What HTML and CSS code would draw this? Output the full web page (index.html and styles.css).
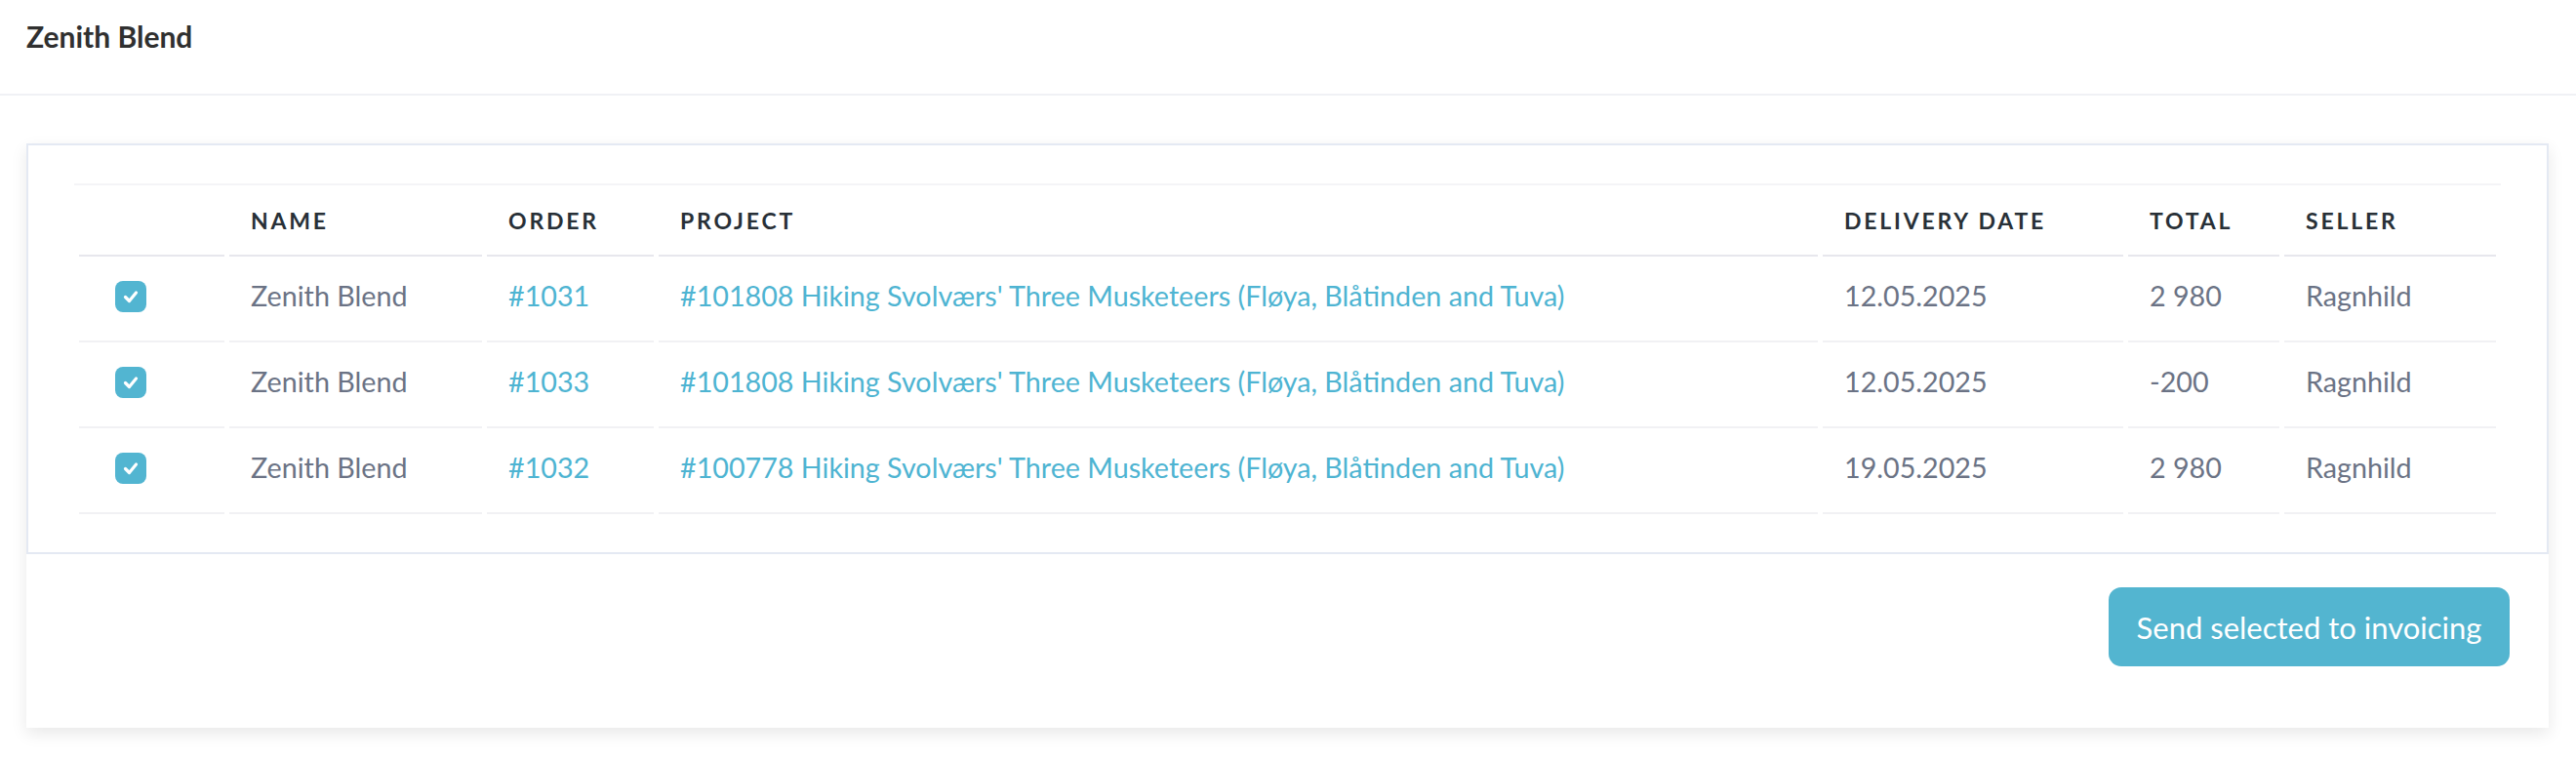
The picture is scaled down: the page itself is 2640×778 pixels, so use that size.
FILE: index.html
```html
<!DOCTYPE html>
<html lang="en">
<head>
    <meta charset="UTF-8">
    <meta name="viewport" content="width=device-width, initial-scale=1.0">
    <title>Zenith Blend</title>
    <link rel="stylesheet" href="styles.css">
</head>
<body>
    <div id="top-bar">
        <h1 id="title">Zenith Blend</h1>
    </div>
    <div id="main">
        <div class="card">
            <div class="card-body">
                <table class="orders">
                    <colgroup>
                        <col class="col-check">
                        <col class="col-name">
                        <col class="col-order">
                        <col class="col-project">
                        <col class="col-date">
                        <col class="col-total">
                        <col class="col-seller">
                    </colgroup>
                    <thead>
                        <tr>
                            <th></th>
                            <th>Name</th>
                            <th>Order</th>
                            <th>Project</th>
                            <th>Delivery date</th>
                            <th>Total</th>
                            <th>Seller</th>
                        </tr>
                    </thead>
                    <tbody>
                        <tr>
                            <td class="check-cell"><span class="checkbox"><svg viewBox="0 0 32 32" width="32" height="32"><path d="M10.5 16.5l4 4 7-8.5" fill="none" stroke="#fff" stroke-width="3.2" stroke-linecap="round" stroke-linejoin="round"/></svg></span></td>
                            <td>Zenith Blend</td>
                            <td><a href="#" class="link">#1031</a></td>
                            <td><a href="#" class="link">#101808 Hiking Svolværs' Three Musketeers (Fløya, Blåtinden and Tuva)</a></td>
                            <td>12.05.2025</td>
                            <td>2 980</td>
                            <td>Ragnhild</td>
                        </tr>
                        <tr>
                            <td class="check-cell"><span class="checkbox"><svg viewBox="0 0 32 32" width="32" height="32"><path d="M10.5 16.5l4 4 7-8.5" fill="none" stroke="#fff" stroke-width="3.2" stroke-linecap="round" stroke-linejoin="round"/></svg></span></td>
                            <td>Zenith Blend</td>
                            <td><a href="#" class="link">#1033</a></td>
                            <td><a href="#" class="link">#101808 Hiking Svolværs' Three Musketeers (Fløya, Blåtinden and Tuva)</a></td>
                            <td>12.05.2025</td>
                            <td>-200</td>
                            <td>Ragnhild</td>
                        </tr>
                        <tr>
                            <td class="check-cell"><span class="checkbox"><svg viewBox="0 0 32 32" width="32" height="32"><path d="M10.5 16.5l4 4 7-8.5" fill="none" stroke="#fff" stroke-width="3.2" stroke-linecap="round" stroke-linejoin="round"/></svg></span></td>
                            <td>Zenith Blend</td>
                            <td><a href="#" class="link">#1032</a></td>
                            <td><a href="#" class="link">#100778 Hiking Svolværs' Three Musketeers (Fløya, Blåtinden and Tuva)</a></td>
                            <td>19.05.2025</td>
                            <td>2 980</td>
                            <td>Ragnhild</td>
                        </tr>
                    </tbody>
                </table>
            </div>
            <div class="card-footer">
                <button class="send-button">Send selected to invoicing</button>
            </div>
        </div>
    </div>
</body>
</html>
```

FILE: styles.css
```css
body{
    margin: 0;
    padding: 0;
    background-color: #ffffff;
    font-family: Lato, "Open Sans", sans-serif;
}

#top-bar{
    box-sizing: border-box;
    height: 98px;
    padding: 19px 27px 0 27px;
    border-bottom: 2px solid #f0f1f5;
}

#title{
    margin: 0;
    font-size: 30px;
    font-weight: 700;
    line-height: 36px;
    color: #303030;
}

#main{
    padding: 49px 28px 30px 27px;
}

.card{
    background-color: #ffffff;
    box-shadow: 0 6px 16px rgba(0, 0, 0, 0.09);
}

.card-body{
    border: 2px solid #e4e9f3;
    padding: 39px 47px 39px 47px;
}

.orders{
    width: 100%;
    table-layout: fixed;
    border-collapse: separate;
    border-spacing: 5px 0;
    border-top: 2px solid #f4f4f7;
}

.col-check{ width: 149px; }
.col-name{ width: 259px; }
.col-order{ width: 171px; }
.col-project{ width: 1188px; }
.col-date{ width: 308px; }
.col-total{ width: 155px; }

.orders th{
    height: 71px;
    padding: 0 0 0 22px;
    text-align: left;
    font-size: 23px;
    font-weight: 700;
    letter-spacing: 2.8px;
    text-transform: uppercase;
    color: #283037;
    border-bottom: 2px solid #e7e7ed;
}

.orders td{
    height: 88px;
    padding: 0 0 6px 22px;
    box-sizing: border-box;
    font-size: 28.7px;
    color: #6b7385;
    white-space: nowrap;
    border-bottom: 2px solid #f1f1f4;
}

.orders .check-cell{
    padding-left: 37px;
}

.checkbox{
    display: flex;
    width: 32px;
    height: 32px;
    border-radius: 8px;
    background-color: #52b5d1;
    margin-top: 2px;
}

.link{
    color: #4eb4d2;
    text-decoration: none;
}

.card-footer{
    display: flex;
    justify-content: flex-end;
    padding: 34px 40px 63px 0;
}

.send-button{
    width: 411px;
    height: 81px;
    border: none;
    border-radius: 13px;
    background-color: #53b5d0;
    color: #ffffff;
    font-family: Lato, "Open Sans", sans-serif;
    font-size: 31px;
}
```
